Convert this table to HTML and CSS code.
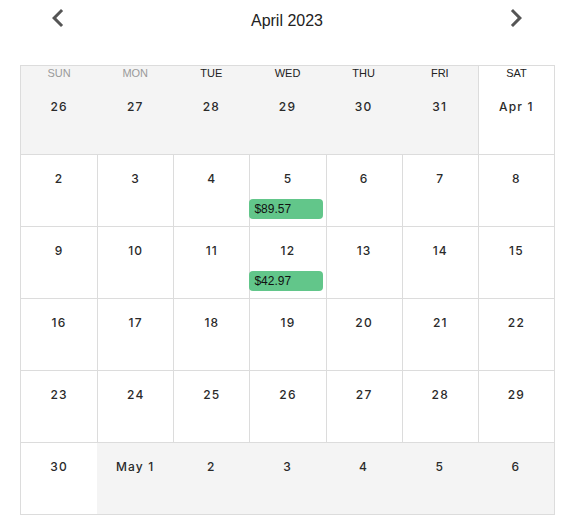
FILE: index.html
```html
<!DOCTYPE html>
<html>
<head>
<meta charset="utf-8">
<link rel="stylesheet" href="styles.css">
</head>
<body>
<div class="app">
  <div class="header">
    <button class="nav" aria-label="Previous month">
      <svg viewBox="0 0 24 24" width="36" height="36"><path d="M15.41 7.41L14 6l-6 6 6 6 1.41-1.41L10.83 12z" fill="#555"/></svg>
    </button>
    <div class="title">April 2023</div>
    <button class="nav" aria-label="Next month">
      <svg viewBox="0 0 24 24" width="36" height="36"><path d="M10 6L8.59 7.41 13.17 12l-4.58 4.59L10 18l6-6z" fill="#555"/></svg>
    </button>
  </div>
  <div class="grid">
    <div class="cell out"><div class="wd muted">SUN</div><div class="num">26</div></div>
    <div class="cell out"><div class="wd muted">MON</div><div class="num">27</div></div>
    <div class="cell out"><div class="wd">TUE</div><div class="num">28</div></div>
    <div class="cell out"><div class="wd">WED</div><div class="num">29</div></div>
    <div class="cell out"><div class="wd">THU</div><div class="num">30</div></div>
    <div class="cell out"><div class="wd">FRI</div><div class="num">31</div></div>
    <div class="cell bl"><div class="wd">SAT</div><div class="num">Apr 1</div></div>

    <div class="cell bt"><div class="num">2</div></div>
    <div class="cell bt bl"><div class="num">3</div></div>
    <div class="cell bt bl"><div class="num">4</div></div>
    <div class="cell bt bl"><div class="num">5</div><div class="pill">$89.57</div></div>
    <div class="cell bt bl"><div class="num">6</div></div>
    <div class="cell bt bl"><div class="num">7</div></div>
    <div class="cell bt bl"><div class="num">8</div></div>

    <div class="cell bt"><div class="num">9</div></div>
    <div class="cell bt bl"><div class="num">10</div></div>
    <div class="cell bt bl"><div class="num">11</div></div>
    <div class="cell bt bl"><div class="num">12</div><div class="pill">$42.97</div></div>
    <div class="cell bt bl"><div class="num">13</div></div>
    <div class="cell bt bl"><div class="num">14</div></div>
    <div class="cell bt bl"><div class="num">15</div></div>

    <div class="cell bt"><div class="num">16</div></div>
    <div class="cell bt bl"><div class="num">17</div></div>
    <div class="cell bt bl"><div class="num">18</div></div>
    <div class="cell bt bl"><div class="num">19</div></div>
    <div class="cell bt bl"><div class="num">20</div></div>
    <div class="cell bt bl"><div class="num">21</div></div>
    <div class="cell bt bl"><div class="num">22</div></div>

    <div class="cell bt"><div class="num">23</div></div>
    <div class="cell bt bl"><div class="num">24</div></div>
    <div class="cell bt bl"><div class="num">25</div></div>
    <div class="cell bt bl"><div class="num">26</div></div>
    <div class="cell bt bl"><div class="num">27</div></div>
    <div class="cell bt bl"><div class="num">28</div></div>
    <div class="cell bt bl"><div class="num">29</div></div>

    <div class="cell bt"><div class="num">30</div></div>
    <div class="cell bt out"><div class="num">May 1</div></div>
    <div class="cell bt out"><div class="num">2</div></div>
    <div class="cell bt out"><div class="num">3</div></div>
    <div class="cell bt out"><div class="num">4</div></div>
    <div class="cell bt out"><div class="num">5</div></div>
    <div class="cell bt out"><div class="num">6</div></div>
  </div>
</div>
</body>
</html>
```

FILE: styles.css
```css
html, body {
  margin: 0;
  padding: 0;
  background: #fff;
}

.app {
  margin-left: 20px;
  width: 535px;
  font-family: "Liberation Sans", Arial, sans-serif;
}

.header {
  height: 40px;
  display: flex;
  align-items: flex-start;
  justify-content: space-between;
  padding: 0 21px 0 20px;
  margin-bottom: 25px;
}

.nav {
  width: 36px;
  height: 36px;
  padding: 0;
  border: 0;
  background: none;
  display: block;
}

.nav svg {
  display: block;
}

.title {
  font-size: 16px;
  line-height: 42px;
  color: #222;
}

.grid {
  display: grid;
  grid-template-columns: repeat(7, 1fr);
  grid-template-rows: 88px repeat(5, 72px);
  border: 1px solid #dcdcdc;
}

.cell {
  box-sizing: border-box;
  background: #fff;
  min-width: 0;
}

.cell.out {
  background: #f4f4f4;
}

.cell.bt {
  border-top: 1px solid #dcdcdc;
}

.cell.bl {
  border-left: 1px solid #dcdcdc;
}

.wd {
  font-size: 11px;
  line-height: 14px;
  padding-bottom: 3px;
  text-align: center;
  color: #222;
}

.wd.muted {
  color: #9a9a9a;
}

.num {
  margin-top: 16px;
  font-family: Inter, "Liberation Sans", sans-serif;
  font-weight: 500;
  font-size: 12px;
  line-height: 16px;
  letter-spacing: 1.2px;
  text-align: center;
  color: #2a2a2a;
}

.pill {
  margin: 12px 3px 0 -1px;
  height: 20px;
  line-height: 20px;
  padding-left: 5px;
  border-radius: 4px;
  background: #62c68a;
  color: #111;
  font-size: 12px;
}
```
